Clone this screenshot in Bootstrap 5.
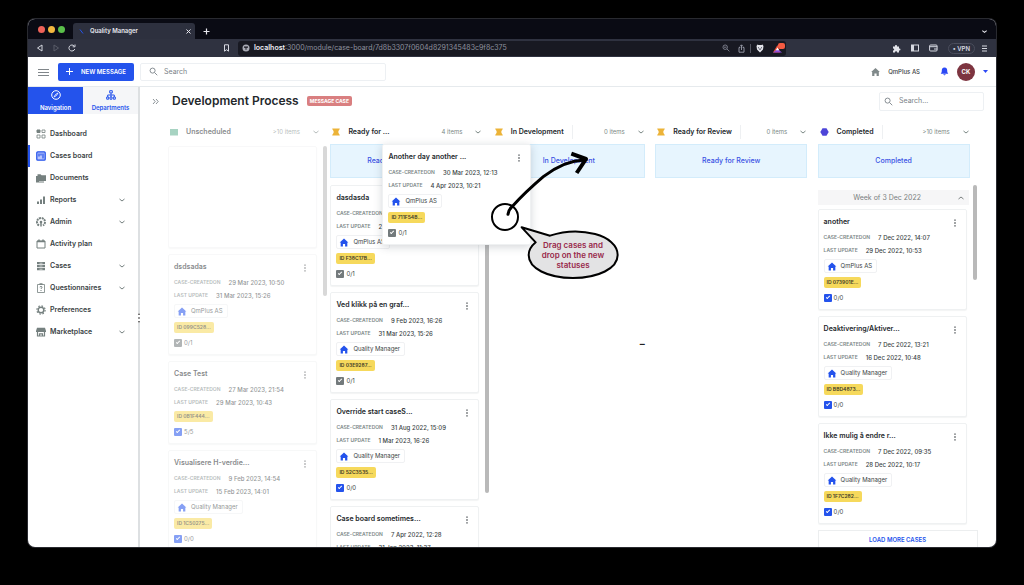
<!DOCTYPE html>
<html lang="en">
<head>
<meta charset="utf-8">
<meta name="viewport" content="width=device-width, initial-scale=1">
<title>Quality Manager</title>
<link href="https://cdn.jsdelivr.net/npm/bootstrap@5.3.0/dist/css/bootstrap.min.css" rel="stylesheet">
<style>
:root{--qm-blue:#2453ec;--qm-ink:#3a3f44;--qm-grey:#75807f;--qm-line:#e6eaed}
body{font-family:"Inter","Liberation Sans",sans-serif;font-size:7px;line-height:12px;color:var(--qm-ink);background:#000;height:100vh;overflow:hidden}
svg{display:block;flex:none;fill:none;stroke:currentColor}
a{color:inherit;text-decoration:none}
button{font:inherit;color:inherit;background:none;border:0;padding:0}
.browser{margin:19px 28px 38px;height:calc(100vh - 57px);border-radius:7px;overflow:hidden;background:#fff;box-shadow:0 0 0 1px #292a30}
.tabstrip{height:20px;padding-left:10px;background:#0a0b14;color:#e8e8ee}
.lights{gap:3px;margin-right:8px}
.light{width:7px;height:7px;border-radius:50%}
.light.red{background:#ee6259}
.light.amber{background:#f3b73f}
.light.green{background:#5abf4a}
.tab{width:122px;height:16px;background:#2d303e;border-radius:3px 3px 0 0;font-weight:600;font-size:6px}
.toolbar{height:18px;background:#2f3240;color:#d6d8e0}
.tools{width:210px}
.tools-end{gap:6px}
.urlbar{height:15px;background:#181922;color:#8e919e;border-radius:3px}
.urlbar b{color:#f0f0f5}
.shields{gap:5px}
.vpn{border:1px solid #4a4d5c;border-radius:8px;height:11px;line-height:9px;font-weight:600;font-size:6px;padding:0 4px}
.apphead{height:30px;border-bottom:1px solid var(--qm-line)}
.burger{margin:0 9px 0 10px;color:#80868a}
.newmsg{height:18px;width:76px;background:var(--qm-blue);color:#fff;font-weight:600;font-size:6px;border-radius:2px}
.field{height:18px;border:1px solid #edf0f3;border-radius:2px;color:#7b8288;gap:6px}
.field input{border:0;outline:0;background:none;width:100%;min-width:0;padding:0;color:#555}
.field input::placeholder{color:#7b8288;opacity:1}
.field-top{width:246px;margin-left:6px}
.field-board{width:105px;height:19px}
.orgname{font-size:6px;font-weight:500;gap:8px;margin-right:20px}
.avatar{width:18px;height:18px;border-radius:50%;background:#7d3440;color:#fff;font-weight:700;font-size:6px}
.side{width:112px;border-right:2px solid #dde0e2}
.sidetab{height:27px;line-height:8px;font-weight:600;font-size:6px;background:#f5f6f8;color:var(--qm-blue)}
.sidetab.active{background:var(--qm-blue);color:#fff}
.menu{margin-top:9px}
.menu a{height:22px;padding-left:6px;padding-right:12px;gap:4px;border-left:2px solid transparent;font-weight:600}
.menu a.active{border-color:var(--qm-blue)}
.menu svg{color:var(--qm-grey)}
.menu a.active svg{color:var(--qm-blue)}
.grip{right:-4px;top:226px;width:5px;height:10px;background:#fff;color:#555}
.pagehead{height:28px;padding-left:12px;padding-right:12px;color:#6f777c}
.pagehead h1{font-size:12px;line-height:16px;font-weight:600;color:#24282c;margin:0 8px 0 13px}
.tagmsg{background:#d97f80;color:#fff;font-size:5px;font-weight:700;line-height:10px;padding:0 3px;border-radius:2px}
.board{display:grid;grid-template-columns:repeat(5,minmax(0,1fr));padding:10px 16px 0 28px}
.lane{min-height:0}
.lanehead{height:14px;width:152px;margin-bottom:5px;padding-left:2px;color:#7b8885}
.lanehead h2{font-size:7px;line-height:14px;font-weight:600;margin:0 0 0 8px;padding-right:8px;border-right:1px solid #eef0f2;color:#24282c}
.count{font-size:6px}
.drop{width:152px;height:34px;background:#e7f5fe;border:1px solid #d3ecfb;color:#3a52e4;line-height:32px;font-weight:500;text-align:center;margin-bottom:7px}
.list{min-height:0;overflow:hidden}
.thumb{top:0;left:155px;width:4px;border-radius:2px;background:#b9b9b9}
.case{width:149px;padding:5px 9px 5px 5px;border:1px solid #eff1f2;border-radius:2px;background:#fff;margin-bottom:6px;box-shadow:0 1px 1px #f3f4f4}
.case h3{font-size:7px;line-height:13px;font-weight:600;margin:0 0 3px;color:#24282c}
.case dl{margin:0;line-height:13px}
.case dl div{gap:8px}
.case dt{font-size:5px;font-weight:600;color:#7c8787}
.case dd{margin:0;font-size:6px;font-weight:500;white-space:nowrap}
.org{width:max-content;height:14px;margin:2px 0 4px;padding:0 4px 0 2px;border:1px solid #f0f1f3;border-radius:2px;font-size:6px}
.org svg{color:var(--qm-blue)}
.idtag{width:max-content;height:11px;line-height:11px;margin-top:2px;padding:0 3px;border-radius:2px;background:#f6d95c;font-size:5px;font-weight:600;color:#3d3a28}
.todo{height:12px;margin-top:4px;font-size:6px;gap:2px;width:max-content}
.todo input{appearance:none;width:8px;height:8px;margin:0;border-radius:1px;background:#737a7c}
.todo input::before{content:"";display:block;width:4px;height:2px;margin:2px;border:solid #fff;border-width:0 0 1px 1px;transform:rotate(-45deg)}
.todo .full{background:var(--qm-blue)}
.faded{opacity:.55}
.faded .case{border-color:#f2f3f4}
.blank{height:102px}
.first-list{margin-top:2px}
.lifted{left:52px;top:19px;z-index:3;box-shadow:0 2px 8px rgba(60,70,80,.22)}
.week{width:151px;height:15px;margin:5px 0 4px;background:#f6f6f7;color:#7a8080}
.more{width:160px;height:20px;border:1px solid #eceeef;color:var(--qm-blue);font-weight:600;font-size:6px}
.hint{left:-13px;top:-10px;z-index:4;pointer-events:none;stroke:#000}
.hint text{font-size:24px;font-weight:600;fill:#98284a;stroke:none;text-anchor:middle}
.dash{width:152px;margin-top:159px;font-weight:700;font-size:10px;color:#222}
</style>
</head>
<body>
<svg width="0" height="0" class="position-absolute" aria-hidden="true">
<symbol id="home" viewBox="0 0 10 10"><path d="M5 .5 9.800 5H8.700v4.500H6.200V6.600H3.800v2.900H1.300V5H.2z" fill="currentColor" stroke="none"/></symbol>
<symbol id="down" viewBox="0 0 8 8"><path d="m1.500 3 2.500 2L6.500 3"/></symbol>
<symbol id="up" viewBox="0 0 8 8"><path d="m1.500 5 2.500-2L6.500 5"/></symbol>
<symbol id="dots" viewBox="0 0 4 10"><path d="M1.200.5h1.600v1.600H1.200zM1.200 4.200h1.600v1.600H1.200zM1.200 7.900h1.600v1.600H1.200z" fill="currentColor" stroke="none"/></symbol>
<symbol id="lens" viewBox="0 0 10 10"><circle cx="4" cy="4" r="2.800"/><path d="m6.200 6.200 3 3"/></symbol>
<symbol id="ticket" viewBox="0 0 8 8"><path d="M.2.5h7.600c-.2 1.800-1.500 2-1.500 3.500S7.600 5.700 7.800 7.500H.2C.4 5.700 1.700 5.500 1.700 4S.4 2.300.2.500z" fill="#ecb338" stroke="none"/></symbol>
</svg>
<div class="browser d-flex flex-column">
  <div class="tabstrip d-flex align-items-end flex-shrink-0">
    <div class="lights d-flex align-self-center">
      <span class="light red"></span><span class="light amber"></span><span class="light green"></span>
    </div>
    <div class="tab d-flex align-items-center px-1">
      <svg width="9" height="9" viewBox="0 0 9 9"><path d="M3 2.500 6 6.500" stroke="#2453ec"/></svg>
      <span class="ms-1 flex-grow-1">Quality Manager</span>
      <button aria-label="Close tab"><svg width="5" height="5" viewBox="0 0 5 5"><path d="m.5.5 4 4m0-4-4 4"/></svg></button>
    </div>
    <button class="ms-2 align-self-center pt-1" aria-label="New tab"><svg width="7" height="7" viewBox="0 0 7 7"><path d="M3.500.5v6m-3-3h6" stroke-width="1.200"/></svg></button>
    <button class="ms-auto me-2 align-self-center pt-1" aria-label="Tab list"><svg width="7" height="7" viewBox="0 0 8 8" stroke-width="1.200"><use href="#down"/></svg></button>
  </div>
  <div class="toolbar d-flex align-items-center flex-shrink-0">
    <div class="tools d-flex align-items-center ps-2 pe-2">
      <button aria-label="Back"><svg width="8" height="8" viewBox="0 0 8 8"><path d="M6 1v6L1.500 4z"/></svg></button>
      <button class="ms-2 opacity-25" aria-label="Forward"><svg width="8" height="8" viewBox="0 0 8 8"><path d="M2 1v6l4.500-3z"/></svg></button>
      <button class="ms-2" aria-label="Reload"><svg width="8" height="8" viewBox="0 0 8 8"><path d="M6.800 5A3 3 0 1 1 6.200 2M7 .5v2.300H4.700"/></svg></button>
      <button class="ms-auto" aria-label="Bookmark"><svg width="7" height="8" viewBox="0 0 7 8"><path d="M1.500.8h4v6.400l-2-1.500-2 1.500z"/></svg></button>
    </div>
    <div class="urlbar flex-grow-1 d-flex align-items-center ps-1">
      <svg width="8" height="8" viewBox="0 0 8 8"><circle cx="4" cy="4" r="3.500" fill="#a9abb5" stroke="none"/><path d="M2 2.500h4v1.200H4.500v2H3.500v-2H2z" fill="#181922" stroke="none"/></svg>
      <span class="ms-1 flex-grow-1"><b class="fw-semibold">localhost</b>:3000/module/case-board/7d8b3307f0604d8291345483c9f8c375</span>
      <span class="d-flex align-items-center gap-2">
        <svg width="8" height="8" viewBox="0 0 10 10"><use href="#lens"/><path d="M2.500 4h3" /></svg>
        <span class="shields d-flex align-items-center">
          <svg width="7" height="9" viewBox="0 0 7 9"><path d="M2.300 3.500H1v4.700h5V3.500H4.700M3.500 6V1m-1.500 1.400L3.500.8 5 2.400"/></svg>
          <span class="vr opacity-50"></span>
          <svg width="8" height="9" viewBox="0 0 8 9"><path d="m1.500.5 1 .4h3l1-.4 1 1.500-.5 3.500L4 8.500 1 5.500.5 2z" fill="#e3e4ea" stroke="none"/><path d="M2.200 3 4 6l1.800-3" stroke="#555866" stroke-width=".8"/></svg>
        </span>
        <svg width="14" height="10" viewBox="0 0 14 10"><g stroke="none"><path d="M1 9.500 5.500 2 8 9.500z" fill="#f0523b"/><path d="M1 9.500 5.500 6 10 9.500z" fill="#8a4bd8"/><path d="m5.500 4.500 1.700 2.800H3.800z" fill="#fff"/><rect x="6" y="0" width="7" height="6" rx="2" fill="#f45b42"/></g></svg>
      </span>
    </div>
    <div class="tools tools-end d-flex align-items-center justify-content-end pe-2">
      <svg width="9" height="9" viewBox="0 0 9 9"><path d="M1 2.500h2C2.500.5 5.500.5 5 2.500h2v2c2-.5 2 2.500 0 2V8.500H5c.3-1.700-2-1.700-2 0H1v-2c1.600.2 1.600-2.200 0-2z" fill="#e3e4ea" stroke="none"/></svg>
      <svg width="8" height="8" viewBox="0 0 8 8" class="me-1 ms-1"><rect x=".5" y="1" width="7" height="6"/><path d="M2 1v6" stroke-width="2"/></svg>
      <svg width="9" height="8" viewBox="0 0 9 8" class="me-1"><rect x=".6" y="1" width="7.500" height="6" rx="1"/><path d="M.6 2.700h7.500M5 5h3"/></svg>
      <button class="vpn">• VPN</button>
      <svg width="7" height="7" viewBox="0 0 7 7"><path d="M1 1h5M1 3.500h5M1 6h5"/></svg>
    </div>
  </div>
  <header class="apphead d-flex align-items-center flex-shrink-0">
    <button class="burger" aria-label="Menu"><svg width="11" height="8" viewBox="0 0 11 8"><path d="M0 1.500h11M0 4.500h11M0 7.500h11"/></svg></button>
    <button class="newmsg d-flex align-items-center justify-content-center gap-2"><svg width="7" height="7" viewBox="0 0 7 7"><path d="M3.500 0v7M0 3.500h7"/></svg>NEW MESSAGE</button>
    <label class="field field-top d-flex align-items-center ps-2"><svg width="9" height="9" viewBox="0 0 10 10"><use href="#lens"/></svg><input type="search" placeholder="Search" aria-label="Search"></label>
    <div class="ms-auto d-flex align-items-center pe-2">
      <a href="#" class="orgname d-flex align-items-center"><svg width="9" height="10" viewBox="0 0 10 10" color="#80898a"><use href="#home"/></svg>QmPlus AS</a>
      <button class="me-2" aria-label="Notifications"><svg width="9" height="9" viewBox="0 0 10 10"><path d="M5 .5C7.500.5 8 2.500 8 4c0 1.800.3 2.500 1.200 3.500H.8C1.700 6.500 2 5.800 2 4 2 2.500 2.500.5 5 .5zM3.700 8h2.600c-.2 1.700-2.400 1.700-2.600 0z" fill="#2c49f5" stroke="none"/></svg></button>
      <span class="avatar d-flex align-items-center justify-content-center me-2">CK</span>
      <button aria-label="Account menu"><svg width="5" height="3" viewBox="0 0 5 3"><path d="M0 0h5L2.500 3z" fill="#2c49f5" stroke="none"/></svg></button>
    </div>
  </header>
  <div class="d-flex flex-grow-1 overflow-hidden">
    <aside class="side position-relative flex-shrink-0">
      <div class="d-flex">
        <button class="sidetab active flex-fill w-50 d-flex flex-column align-items-center justify-content-center"><svg width="10" height="10" viewBox="0 0 10 10" class="mb-1"><circle cx="5" cy="5" r="4.300"/><path d="M7 3 5.500 5.500 3 7l1.500-2.500z" stroke-width=".8"/></svg>Navigation</button>
        <button class="sidetab flex-fill w-50 d-flex flex-column align-items-center justify-content-center"><svg width="10" height="10" viewBox="0 0 10 10" class="mb-1"><path d="M3.700.7h2.600v2.200H3.700zM.7 7h2v2.200h-2zM4 7h2v2.200H4zM7.300 7h2v2.200h-2zM5 3v4M1.700 7V5h6.600v2"/></svg>Departments</button>
      </div>
      <nav class="menu d-flex flex-column">
        <a href="#" class="d-flex align-items-center"><svg width="10" height="10" viewBox="0 0 10 10"><path d="M1 1h3v2.500H1z" fill="currentColor"/><path d="M6 1h3v2.500H6zM1 6h3v3H1zM6 6h3v3H6z" stroke-width=".8"/></svg><span>Dashboard</span></a>
        <a href="#" class="active d-flex align-items-center"><svg width="10" height="10" viewBox="0 0 10 10"><rect x=".8" y=".8" width="8.400" height="8.400" rx="1" fill="#b9c5fb" stroke-width="1.300"/><path d="M3 2.500v3M5 2.500v2M7 2.500v5" stroke-width="1.200"/></svg><span>Cases board</span></a>
        <a href="#" class="d-flex align-items-center"><svg width="10" height="10" viewBox="0 0 10 10"><path d="M0 3h1v5.500h7v.9H0zM1.500 1.300h3l1 1H10V8H1.500z" fill="currentColor" stroke="none"/><path d="M0 3h3v6H0z" fill="currentColor" stroke="none"/></svg><span>Documents</span></a>
        <a href="#" class="d-flex align-items-center"><svg width="10" height="10" viewBox="0 0 10 10"><path d="M2 9V6.500M5 9V4.500M8 9V1.500" stroke-width="2"/></svg><span>Reports</span><svg width="8" height="8" class="ms-auto"><use href="#down"/></svg></a>
        <a href="#" class="d-flex align-items-center"><svg width="10" height="10" viewBox="0 0 10 10"><path d="M3 8.500A4 4 0 1 1 7 8.500" stroke-width="2" stroke-dasharray="2 .7"/><circle cx="5" cy="5" r="1.300" fill="currentColor" stroke="none"/><path d="M5 6v3.500" stroke-width="1.500"/></svg><span>Admin</span><svg width="8" height="8" class="ms-auto"><use href="#down"/></svg></a>
        <a href="#" class="d-flex align-items-center"><svg width="10" height="10" viewBox="0 0 10 10"><path d="M1 2h8v7H1z"/><path d="M1 2.500h8M3 .5v1.500M7 .5v1.500" stroke-width="1.500"/></svg><span>Activity plan</span></a>
        <a href="#" class="d-flex align-items-center"><svg width="10" height="10" viewBox="0 0 10 10"><path d="M1 1h8v2H1zM1 3.800h8v2.400H1zM1 7h8v2.200H1z" fill="currentColor" stroke="none"/><path d="M3.500 2.200h3M3.500 5h3M3.500 8.200h3" stroke="#fff" stroke-width=".6"/></svg><span>Cases</span><svg width="8" height="8" class="ms-auto"><use href="#down"/></svg></a>
        <a href="#" class="d-flex align-items-center"><svg width="10" height="10" viewBox="0 0 10 10"><path d="M1.500 1.500h7v8h-7z" stroke-width=".8"/><path d="M3.500.3h3v1.500h-3z" fill="currentColor" stroke="none"/><path d="M4 4.300c0-1.300 2-1.300 2 0 0 .7-1 .8-1 1.700M5 7v1"/></svg><span>Questionnaires</span><svg width="8" height="8" class="ms-auto"><use href="#down"/></svg></a>
        <a href="#" class="d-flex align-items-center"><svg width="10" height="10" viewBox="0 0 10 10"><circle cx="5" cy="5" r="2.800" stroke-width="1.400"/><circle cx="5" cy="5" r="4.100" stroke-width="1.200" stroke-dasharray="1.600 1.620"/></svg><span>Preferences</span></a>
        <a href="#" class="d-flex align-items-center"><svg width="10" height="10" viewBox="0 0 10 10"><path d="M1 .8h8L10 4v1H0V4z" fill="currentColor" stroke="none"/><path d="M1.500 5v4h7V5M3.500 9V6.800h3V9" stroke-width="1.200"/></svg><span>Marketplace</span><svg width="8" height="8" class="ms-auto"><use href="#down"/></svg></a>
      </nav>
      <span class="grip position-absolute"><svg width="4" height="10" viewBox="0 0 4 10"><use href="#dots"/></svg></span>
    </aside>
    <main class="flex-grow-1 d-flex flex-column overflow-hidden">
      <div class="pagehead d-flex align-items-center flex-shrink-0">
        <button aria-label="Expand"><svg width="7" height="7" viewBox="0 0 7 7"><path d="m1 1 2.200 2.500L1 6M4 1l2.200 2.500L4 6" stroke-width=".8"/></svg></button>
        <h1>Development Process</h1>
        <span class="tagmsg">MESSAGE CASE</span>
        <label class="field field-board d-flex align-items-center ms-auto ps-1"><svg width="9" height="9" viewBox="0 0 10 10"><use href="#lens"/></svg><input type="search" placeholder="Search..." aria-label="Search cases"></label>
      </div>
      <div class="board flex-grow-1 overflow-hidden">
        <section class="lane d-flex flex-column faded">
          <div class="lanehead d-flex align-items-center"><svg width="8" height="8" viewBox="0 0 8 8"><path d="M0 1h8v6.500H0z" fill="#5faf90" stroke="none"/></svg><h2 class="border-0">Unscheduled</h2><span class="count ms-auto me-2">&gt;10 items</span><button class="ms-1" aria-label="Collapse"><svg width="8" height="8"><use href="#down"/></svg></button></div>
          <div class="list first-list position-relative">
            <div class="case blank"></div>
            <article class="case">
              <div class="d-flex justify-content-between"><h3>dsdsadas</h3><button aria-label="More"><svg width="4" height="8"><use href="#dots"/></svg></button></div>
              <dl><div class="d-flex"><dt>CASE-CREATEDON</dt><dd>29 Mar 2023, 10:50</dd></div><div class="d-flex"><dt>LAST UPDATE</dt><dd>31 Mar 2023, 15:26</dd></div></dl>
              <div class="org d-flex align-items-center gap-1"><svg width="10" height="9"><use href="#home"/></svg>QmPlus AS</div>
              <div class="idtag">ID 099C528...</div>
              <label class="todo d-flex align-items-center"><input type="checkbox" checked>0/1</label>
            </article>
            <article class="case">
              <div class="d-flex justify-content-between"><h3>Case Test</h3><button aria-label="More"><svg width="4" height="8"><use href="#dots"/></svg></button></div>
              <dl><div class="d-flex"><dt>CASE-CREATEDON</dt><dd>27 Mar 2023, 21:54</dd></div><div class="d-flex"><dt>LAST UPDATE</dt><dd>29 Mar 2023, 10:43</dd></div></dl>
              <div class="idtag">ID 0B1F444...</div>
              <label class="todo d-flex align-items-center"><input type="checkbox" class="full" checked>5/5</label>
            </article>
            <article class="case">
              <div class="d-flex justify-content-between"><h3>Visualisere H-verdie...</h3><button aria-label="More"><svg width="4" height="8"><use href="#dots"/></svg></button></div>
              <dl><div class="d-flex"><dt>CASE-CREATEDON</dt><dd>9 Feb 2023, 14:54</dd></div><div class="d-flex"><dt>LAST UPDATE</dt><dd>15 Feb 2023, 14:01</dd></div></dl>
              <div class="org d-flex align-items-center gap-1"><svg width="10" height="9"><use href="#home"/></svg>Quality Manager</div>
              <div class="idtag">ID 1C50275...</div>
              <label class="todo d-flex align-items-center"><input type="checkbox" class="full" checked>0/0</label>
            </article>
            <div class="thumb position-absolute" style="height:150px"></div>
          </div>
        </section>
        <section class="lane d-flex flex-column position-relative">
          <div class="lanehead d-flex align-items-center"><svg width="8" height="8"><use href="#ticket"/></svg><h2 class="border-0">Ready for ...</h2><span class="count ms-auto me-2">4 items</span><button class="ms-1" aria-label="Collapse"><svg width="8" height="8"><use href="#down"/></svg></button></div>
          <div class="drop">Ready for Development</div>
          <div class="list position-relative">
            <article class="case">
              <div class="d-flex justify-content-between"><h3>dasdasda</h3></div>
              <dl><div class="d-flex"><dt>CASE-CREATEDON</dt><dd>29 Mar 2023, 10:51</dd></div><div class="d-flex"><dt>LAST UPDATE</dt><dd>29 Mar 2023, 10:51</dd></div></dl>
              <div class="org d-flex align-items-center gap-1"><svg width="10" height="9"><use href="#home"/></svg>QmPlus AS</div>
              <div class="idtag">ID F38C17B...</div>
              <label class="todo d-flex align-items-center"><input type="checkbox" checked>0/1</label>
            </article>
            <article class="case">
              <div class="d-flex justify-content-between"><h3>Ved klikk på en graf...</h3><button aria-label="More"><svg width="4" height="8"><use href="#dots"/></svg></button></div>
              <dl><div class="d-flex"><dt>CASE-CREATEDON</dt><dd>9 Feb 2023, 16:26</dd></div><div class="d-flex"><dt>LAST UPDATE</dt><dd>31 Mar 2023, 15:26</dd></div></dl>
              <div class="org d-flex align-items-center gap-1"><svg width="10" height="9"><use href="#home"/></svg>Quality Manager</div>
              <div class="idtag">ID 03E9287...</div>
              <label class="todo d-flex align-items-center"><input type="checkbox" checked>0/1</label>
            </article>
            <article class="case">
              <div class="d-flex justify-content-between"><h3>Override start caseS...</h3><button aria-label="More"><svg width="4" height="8"><use href="#dots"/></svg></button></div>
              <dl><div class="d-flex"><dt>CASE-CREATEDON</dt><dd>31 Aug 2022, 15:09</dd></div><div class="d-flex"><dt>LAST UPDATE</dt><dd>1 Mar 2023, 16:26</dd></div></dl>
              <div class="org d-flex align-items-center gap-1"><svg width="10" height="9"><use href="#home"/></svg>Quality Manager</div>
              <div class="idtag">ID 52C3535...</div>
              <label class="todo d-flex align-items-center"><input type="checkbox" class="full" checked>0/0</label>
            </article>
            <article class="case">
              <div class="d-flex justify-content-between"><h3>Case board sometimes...</h3><button aria-label="More"><svg width="4" height="8"><use href="#dots"/></svg></button></div>
              <dl><div class="d-flex"><dt>CASE-CREATEDON</dt><dd>7 Apr 2022, 12:28</dd></div><div class="d-flex"><dt>LAST UPDATE</dt><dd>31 Jan 2023, 11:37</dd></div></dl>
            </article>
            <div class="thumb position-absolute" style="height:308px"></div>
          </div>
          <article class="case lifted position-absolute">
            <div class="d-flex justify-content-between"><h3>Another day another ...</h3><button aria-label="More"><svg width="4" height="8"><use href="#dots"/></svg></button></div>
            <dl><div class="d-flex"><dt>CASE-CREATEDON</dt><dd>30 Mar 2023, 12:13</dd></div><div class="d-flex"><dt>LAST UPDATE</dt><dd>4 Apr 2023, 10:21</dd></div></dl>
            <div class="org d-flex align-items-center gap-1"><svg width="10" height="9"><use href="#home"/></svg>QmPlus AS</div>
            <div class="idtag">ID 711F54B...</div>
            <label class="todo d-flex align-items-center"><input type="checkbox" checked>0/1</label>
          </article>
        </section>
        <section class="lane position-relative">
          <div class="lanehead d-flex align-items-center"><svg width="8" height="8"><use href="#ticket"/></svg><h2>In Development</h2><span class="count ms-auto me-2">0 items</span><button class="ms-1" aria-label="Collapse"><svg width="8" height="8"><use href="#down"/></svg></button></div>
          <div class="drop">In Development</div>
          <div class="dash text-end">–</div>
          <svg class="hint position-absolute" width="180" height="180" viewBox="0 0 540 540" stroke-linecap="round" stroke-linejoin="round">
            <circle cx="75" cy="306" r="39" stroke-width="6"/>
            <path d="M84 298q2-14 12-23 40-44 94-90 62-48 124-50" stroke-width="9"/>
            <path d="m274 116 44 16-28 42" stroke-width="12" stroke-linecap="butt"/>
            <path d="M125 337 210 362C300 332 413 360 413 420 413 460 355 489 279 489 203 489 146 460 146 420 146 406 154 393 167 382z" fill="#e3e3e4" stroke-width="6"/>
            <text x="279" y="400">Drag cases and</text><text x="279" y="429">drop on the new</text><text x="279" y="458">statuses</text>
          </svg>
        </section>
        <section class="lane">
          <div class="lanehead d-flex align-items-center"><svg width="8" height="8"><use href="#ticket"/></svg><h2>Ready for Review</h2><span class="count ms-auto me-2">0 items</span><button class="ms-1" aria-label="Collapse"><svg width="8" height="8"><use href="#down"/></svg></button></div>
          <div class="drop">Ready for Review</div>
        </section>
        <section class="lane d-flex flex-column">
          <div class="lanehead d-flex align-items-center"><svg width="9" height="8" viewBox="0 0 9 8"><path d="M2.500.3h4L8.700 4 6.500 7.700h-4L.3 4z" fill="#4d45d8" stroke="none"/></svg><h2>Completed</h2><span class="count ms-auto me-2">&gt;10 items</span><button class="ms-1" aria-label="Collapse"><svg width="8" height="8"><use href="#down"/></svg></button></div>
          <div class="drop">Completed</div>
          <div class="list position-relative">
            <button class="week d-flex align-items-center pe-1"><span class="flex-grow-1">Week of 3 Dec 2022</span><svg width="8" height="8"><use href="#up"/></svg></button>
            <article class="case">
              <div class="d-flex justify-content-between"><h3>another</h3><button aria-label="More"><svg width="4" height="8"><use href="#dots"/></svg></button></div>
              <dl><div class="d-flex"><dt>CASE-CREATEDON</dt><dd>7 Dec 2022, 14:07</dd></div><div class="d-flex"><dt>LAST UPDATE</dt><dd>29 Dec 2022, 10:53</dd></div></dl>
              <div class="org d-flex align-items-center gap-1"><svg width="10" height="9"><use href="#home"/></svg>QmPlus AS</div>
              <div class="idtag">ID 073901E...</div>
              <label class="todo d-flex align-items-center"><input type="checkbox" class="full" checked>0/0</label>
            </article>
            <article class="case">
              <div class="d-flex justify-content-between"><h3>Deaktivering/Aktiver...</h3><button aria-label="More"><svg width="4" height="8"><use href="#dots"/></svg></button></div>
              <dl><div class="d-flex"><dt>CASE-CREATEDON</dt><dd>7 Dec 2022, 13:21</dd></div><div class="d-flex"><dt>LAST UPDATE</dt><dd>16 Dec 2022, 10:48</dd></div></dl>
              <div class="org d-flex align-items-center gap-1"><svg width="10" height="9"><use href="#home"/></svg>Quality Manager</div>
              <div class="idtag">ID BBD4873...</div>
              <label class="todo d-flex align-items-center"><input type="checkbox" class="full" checked>0/0</label>
            </article>
            <article class="case">
              <div class="d-flex justify-content-between"><h3>Ikke mulig å endre r...</h3><button aria-label="More"><svg width="4" height="8"><use href="#dots"/></svg></button></div>
              <dl><div class="d-flex"><dt>CASE-CREATEDON</dt><dd>7 Dec 2022, 09:35</dd></div><div class="d-flex"><dt>LAST UPDATE</dt><dd>28 Dec 2022, 10:17</dd></div></dl>
              <div class="org d-flex align-items-center gap-1"><svg width="10" height="9"><use href="#home"/></svg>Quality Manager</div>
              <div class="idtag">ID 1F7C282...</div>
              <label class="todo d-flex align-items-center"><input type="checkbox" class="full" checked>0/0</label>
            </article>
            <button class="more">LOAD MORE CASES</button>
            <div class="thumb position-absolute" style="height:95px"></div>
          </div>
        </section>
      </div>
    </main>
  </div>
</div>
<script src="https://cdn.jsdelivr.net/npm/bootstrap@5.3.0/dist/js/bootstrap.bundle.min.js"></script>
</body>
</html>
